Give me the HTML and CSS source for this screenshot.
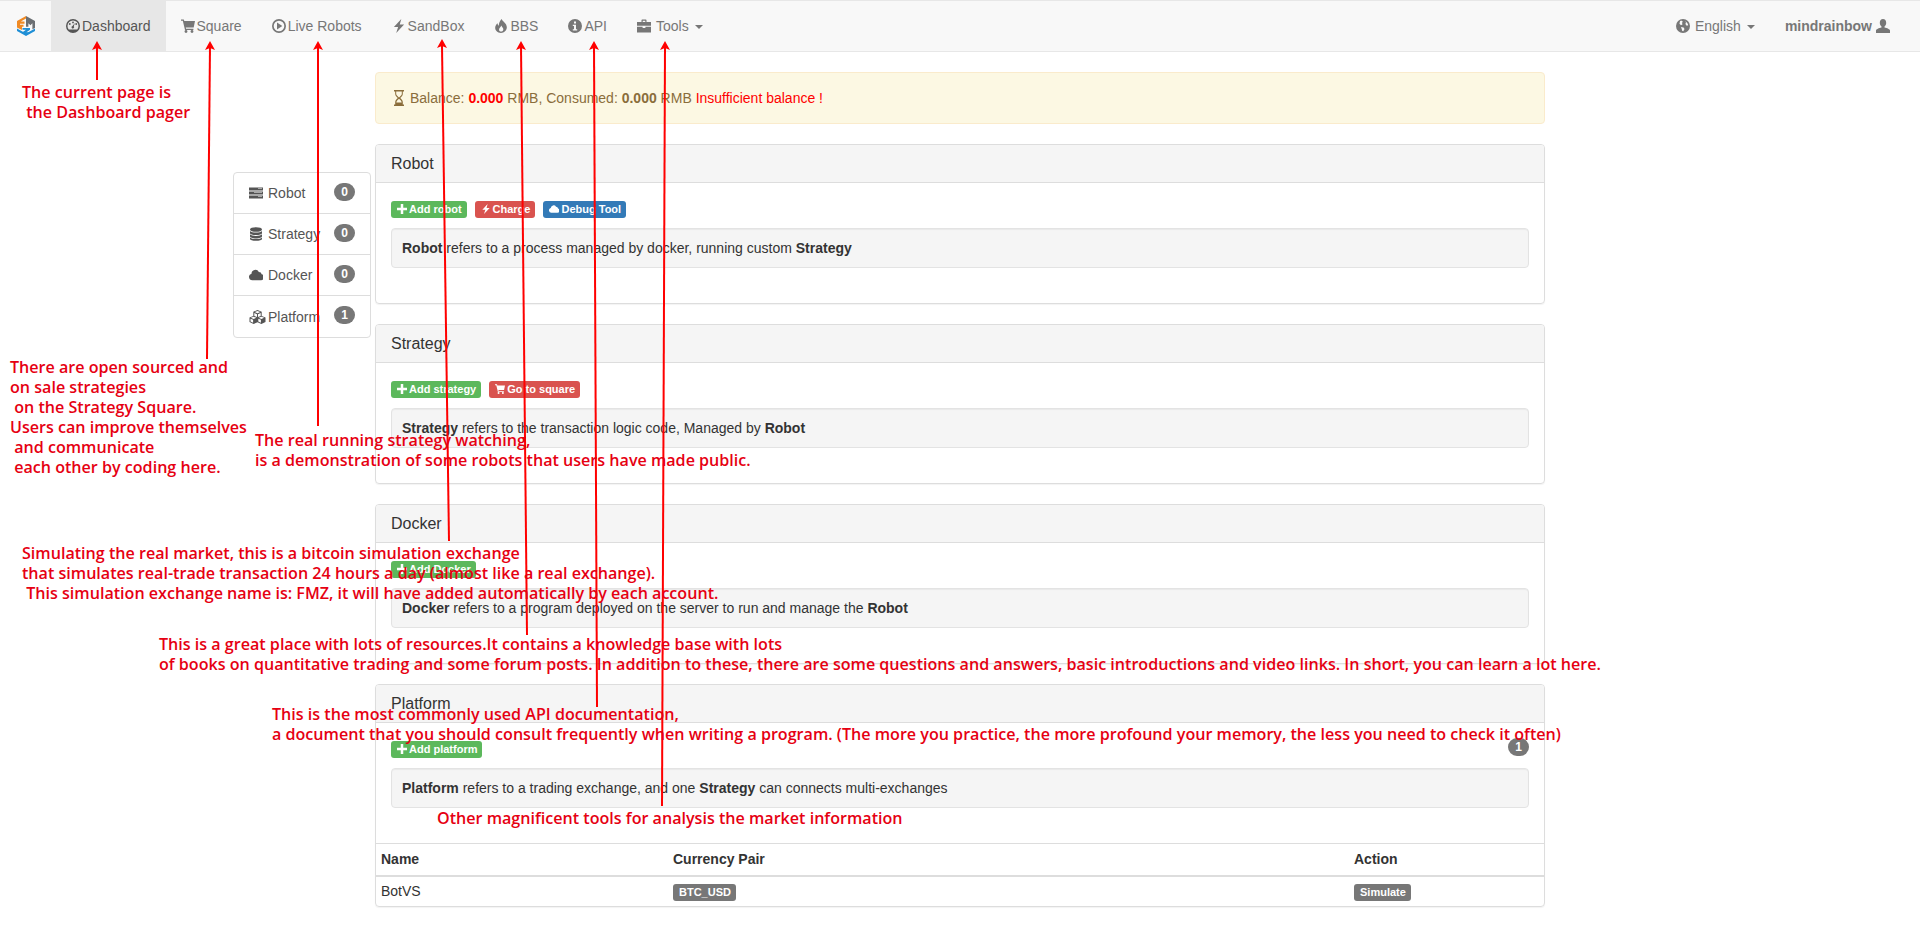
FILE: index.html
```html
<!DOCTYPE html>
<html lang="en">
<head>
    <meta charset="UTF-8">
    <meta name="viewport" content="width=device-width, initial-scale=1.0">
    <title>Dashboard</title>
    <link rel="stylesheet" href="styles.css">
</head>
<body>
    <svg width="0" height="0" class="defs">
        <defs>
            <symbol id="i-dashboard" viewBox="0 0 14 14"><path fill-rule="evenodd" d="M7 0a7 7 0 1 0 0 14A7 7 0 0 0 7 0zm0 1.500a5.500 5.500 0 0 1 5.500 5.500c0 1.300-.45 2.500-1.200 3.500H2.700A5.480 5.480 0 0 1 1.500 7 5.500 5.500 0 0 1 7 1.500z"/><circle cx="7" cy="3.400" r=".9"/><circle cx="3.800" cy="5" r=".9"/><circle cx="10.200" cy="5" r=".9"/><path d="M8.900 3.900 7.800 7.300a1.300 1.300 0 1 1-1.300-.4z"/></symbol>
            <symbol id="i-cart" viewBox="0 0 14 14"><path d="M0 .5h2.800l.5 1.500H14l-1.300 6.500H4.800l.3 1.200h7.300v1.200H4L1.800 1.700H0z"/><circle cx="5" cy="12.500" r="1.400"/><circle cx="11" cy="12.500" r="1.400"/></symbol>
            <symbol id="i-play" viewBox="0 0 14 14"><path fill-rule="evenodd" d="M7 0a7 7 0 1 0 0 14A7 7 0 0 0 7 0zm0 1.700a5.300 5.300 0 1 1 0 10.600A5.300 5.300 0 0 1 7 1.700z"/><path d="M5 3.600 10.300 7 5 10.400z"/></symbol>
            <symbol id="i-flash" viewBox="1.500 0 11 14" preserveAspectRatio="none"><path d="M8.800 0 3 8h3.300L4.800 14 11 5.600H7.600z"/></symbol>
            <symbol id="i-fire" viewBox="1 0 12 14" preserveAspectRatio="none"><path fill-rule="evenodd" d="M7.500 0c.6 2.200 4.500 4.300 4.500 8.300C12 11.500 9.500 14 7 14c-3 0-5-2.500-5-5.200 0-2 1-3.600 2.100-4.600 0 1.200.3 2 1 2.600C5 4.300 6 1.800 7.500 0zM7.300 6.500c-.4 1.500-2 2.400-2 4.200 0 1 .7 1.900 1.700 1.900 1.200 0 2-1 2-2.200 0-1.600-1.300-2.400-1.700-3.900z"/></symbol>
            <symbol id="i-info" viewBox="0 0 14 14"><path fill-rule="evenodd" d="M7 0a7 7 0 1 0 0 14A7 7 0 0 0 7 0zM6 2.400h2v2H6zM4.800 5.700H8v4.500h1.200v1.400H4.800v-1.400H6V7.100H4.800z"/></symbol>
            <symbol id="i-briefcase" viewBox="0 0 14 14"><path fill-rule="evenodd" d="M4.500 3V1.200c0-.4.300-.7.700-.7h3.600c.4 0 .7.300.7.700V3H14v3.800H0V3zm1.200 0h2.600V1.700H5.700zM0 7.800h5.600V9h2.800V7.800H14V13.500H0z"/></symbol>
            <symbol id="i-globe" viewBox="0 0 14 14"><path fill-rule="evenodd" d="M7 0a7 7 0 1 0 0 14A7 7 0 0 0 7 0zM4 2.200c.8-.5 1.500-.5 2.200-.3L6.800 3l-1 .8.800 1.400-1.600 1-1.500-1.500zM9.200 2.200c1.500.7 2.800 2.300 3 4l-1.500.6L9.400 5l.6-1.500zM5 8l2.600.4.900 1.600-1.200 2.300-1-.4-.6-2z"/></symbol>
            <symbol id="i-user" viewBox="0 0 14 14"><path d="M7 0c2 0 3.200 1.500 3.200 3.700 0 1.700-.7 3-1.700 3.700v1.200c2.500.6 5.500 1.700 5.500 3V14H0v-2.400c0-1.300 3-2.400 5.500-3V7.400c-1-.7-1.700-2-1.700-3.700C3.800 1.500 5 0 7 0z"/></symbol>
            <symbol id="i-tasks" viewBox="0 0 14 14"><path fill-rule="evenodd" d="M0 1.500h14v3H0zm9 1h4v-.6H9zM0 5.500h14v3H0zm5 1h8v-.6H5zM0 9.500h14v3H0zm9 1h4v-.6H9z"/></symbol>
            <symbol id="i-database" viewBox="0 0 14 14"><ellipse cx="7" cy="2.500" rx="6" ry="2.300"/><path d="M1 3.900c1 1.200 3.300 1.700 6 1.700s5-.5 6-1.700v2c0 1.300-2.700 2.200-6 2.200S1 7.200 1 5.900z"/><path d="M1 7.300c1 1.200 3.300 1.700 6 1.700s5-.5 6-1.700v2c0 1.300-2.700 2.200-6 2.200s-6-.9-6-2.200z"/><path d="M1 10.500c1 1.200 3.300 1.500 6 1.500s5-.3 6-1.500v1.200c0 1.300-2.700 2.100-6 2.100s-6-.8-6-2.100z"/></symbol>
            <symbol id="i-cloud" viewBox="0 1 13.500 12"><path d="M3.200 12A3.200 3.200 0 0 1 2.400 5.700 3.800 3.800 0 0 1 9.500 4a2.700 2.700 0 0 1 2.700 2.300A2.900 2.900 0 0 1 11.200 12z"/></symbol>
            <symbol id="i-cubes" viewBox="0 0 17 14"><path fill-rule="evenodd" d="M8.500 0 12.700 1.700V6l3.800 1.600v4.500L12.400 14 8.500 12.300 4.600 14 .5 12.100V7.600L4.300 6V1.700zM5.700 2l2.800 1.200L11.300 2 8.500.9zM5.300 3v3l2.700 1.100V4.200zM9 4.200v2.900L11.700 6V3zM1.800 7.800l2.800 1.200 2.800-1.200-2.800-1.100zM9.600 7.800l2.800 1.200 2.800-1.200-2.800-1.100zM1.500 8.700v2.800L4.100 12.700V9.800zM9.300 8.700v2.800l2.600 1.200V9.800z"/></symbol>
            <symbol id="i-plus" viewBox="0 0 12 12"><path d="M4.500 0h3v4.500H12v3H7.500V12h-3V7.500H0v-3h4.500z"/></symbol>
            <symbol id="i-hourglass" viewBox="0 0 12 16"><path fill-rule="evenodd" d="M1 0h10v1.500H9.800V4c0 1.700-1.600 3-2.600 4 1 1 2.600 2.300 2.600 4v2.500H11V16H1v-1.500h1.200V12c0-1.700 1.600-3 2.600-4-1-1-2.600-2.300-2.600-4V1.500H1zm2.200 1.500V4c0 1.200 1.800 2.600 2.800 3.400C7 6.600 8.800 5.200 8.800 4V1.500zM6 8.700C5 9.500 3.600 10.700 3.300 12.500h5.400C8.400 10.700 7 9.500 6 8.700z"/></symbol>
        </defs>
    </svg>

    <nav class="navbar">
        <ul class="nav-list">
            <li class="brand">
                <svg class="logo" viewBox="0 0 18 20">
                    <path fill="#f08a24" d="M9 0 0 5v6.500L3 13V7.800h4.500V5.400H3.800L9 2.500z"/>
                    <path fill="#f08a24" d="M3 8.800h3.500v2H5V14l-2-1z"/>
                    <path fill="#6b6f73" d="M9 0l9 5v7l-2.600 1.200V7.200l-2 2-2-2v3.500H9V2.500z"/>
                    <path fill="#1f8fd6" d="M0 12.500 9 17.500l9-5V15l-9 5-9-5z"/>
                    <path fill="#1f8fd6" d="M5.500 12h7.500v1.800l-3.500 2.400h3.700V17L9 19l-3.500-2v-.8l3.500-2.400H5.500z"/>
                </svg>
            </li>
            <li class="nav-item active"><svg class="icon"><use href="#i-dashboard"/></svg>Dashboard</li>
            <li class="nav-item"><svg class="icon"><use href="#i-cart"/></svg>Square</li>
            <li class="nav-item"><svg class="icon"><use href="#i-play"/></svg>Live Robots</li>
            <li class="nav-item"><svg class="icon"><use href="#i-flash"/></svg>SandBox</li>
            <li class="nav-item"><svg class="icon"><use href="#i-fire"/></svg>BBS</li>
            <li class="nav-item"><svg class="icon"><use href="#i-info"/></svg>API</li>
            <li class="nav-item"><svg class="icon icon-wide"><use href="#i-briefcase"/></svg>Tools<span class="caret"></span></li>
        </ul>
        <ul class="nav-list nav-right">
            <li class="nav-item"><svg class="icon icon-wide"><use href="#i-globe"/></svg>English<span class="caret"></span></li>
            <li class="nav-item nav-user">mindrainbow<svg class="icon icon-after"><use href="#i-user"/></svg></li>
        </ul>
    </nav>

    <div class="page">
        <ul class="side-list">
            <li class="side-item"><svg class="icon side-icon"><use href="#i-tasks"/></svg><span class="side-name">Robot</span><span class="badge">0</span></li>
            <li class="side-item"><svg class="icon side-icon"><use href="#i-database"/></svg><span class="side-name">Strategy</span><span class="badge">0</span></li>
            <li class="side-item"><svg class="icon side-icon"><use href="#i-cloud"/></svg><span class="side-name">Docker</span><span class="badge">0</span></li>
            <li class="side-item"><svg class="icon side-icon side-cubes"><use href="#i-cubes"/></svg><span class="side-name">Platform</span><span class="badge">1</span></li>
        </ul>

        <main class="content">
            <div class="alert">
                <svg class="icon hourglass"><use href="#i-hourglass"/></svg>Balance: <b class="red">0.000</b> RMB, Consumed: <b>0.000</b> RMB <span class="red">Insufficient balance !</span>
            </div>

            <section class="panel">
                <h3 class="panel-title">Robot</h3>
                <div class="panel-body">
                    <div class="actions">
                        <span class="label green"><svg class="label-icon"><use href="#i-plus"/></svg>Add robot</span>
                        <span class="label red-bg"><svg class="label-icon"><use href="#i-flash"/></svg>Charge</span>
                        <span class="label blue"><svg class="label-icon"><use href="#i-cloud"/></svg>Debug Tool</span>
                    </div>
                    <div class="well"><b>Robot</b> refers to a process managed by docker, running custom <b>Strategy</b></div>
                </div>
            </section>

            <section class="panel">
                <h3 class="panel-title">Strategy</h3>
                <div class="panel-body">
                    <div class="actions">
                        <span class="label green"><svg class="label-icon"><use href="#i-plus"/></svg>Add strategy</span>
                        <span class="label red-bg"><svg class="label-icon"><use href="#i-cart"/></svg>Go to square</span>
                    </div>
                    <div class="well"><b>Strategy</b> refers to the transaction logic code, Managed by <b>Robot</b></div>
                </div>
            </section>

            <section class="panel">
                <h3 class="panel-title">Docker</h3>
                <div class="panel-body">
                    <div class="actions">
                        <span class="label green"><svg class="label-icon"><use href="#i-plus"/></svg>Add Docker</span>
                    </div>
                    <div class="well"><b>Docker</b> refers to a program deployed on the server to run and manage the <b>Robot</b></div>
                </div>
            </section>

            <section class="panel">
                <h3 class="panel-title">Platform</h3>
                <div class="panel-body">
                    <div class="actions actions-count">
                        <span class="label green"><svg class="label-icon"><use href="#i-plus"/></svg>Add platform</span>
                        <span class="badge">1</span>
                    </div>
                    <div class="well"><b>Platform</b> refers to a trading exchange, and one <b>Strategy</b> can connects multi-exchanges</div>
                </div>
                <table class="table">
                    <thead>
                        <tr><th class="col-name">Name</th><th class="col-pair">Currency Pair</th><th>Action</th></tr>
                    </thead>
                    <tbody>
                        <tr><td>BotVS</td><td><span class="label grey">BTC_USD</span></td><td><span class="label grey">Simulate</span></td></tr>
                    </tbody>
                </table>
            </section>
        </main>
    </div>

    <!-- red notes drawn on top of the screenshot -->
    <svg class="arrows" viewBox="0 0 1920 947">
        <g class="arrow-lines">
            <line x1="97" y1="80" x2="97" y2="46"/>
            <line x1="207" y1="359" x2="210" y2="46"/>
            <line x1="318" y1="426" x2="318" y2="46"/>
            <line x1="449" y1="541" x2="442" y2="46"/>
            <line x1="527" y1="635" x2="521" y2="46"/>
            <line x1="597" y1="707" x2="594" y2="46"/>
            <line x1="662" y1="806" x2="665" y2="46"/>
        </g>
        <g class="arrow-heads">
            <path d="M97 41l5 9-5-2-5 2z"/>
            <path d="M210 41l5 9-5-2-5 2z"/>
            <path d="M318 41l5 9-5-2-5 2z"/>
            <path d="M442 39l5 9-5-2-5 2z"/>
            <path d="M521 41l5 9-5-2-5 2z"/>
            <path d="M594 41l5 9-5-2-5 2z"/>
            <path d="M665 41l5 9-5-2-5 2z"/>
        </g>
    </svg>
    <div class="note note-current">The current page is
 the Dashboard pager</div>
    <div class="note note-square">There are open sourced and
on sale strategies
 on the Strategy Square.
Users can improve themselves
 and communicate
 each other by coding here.</div>
    <div class="note note-live">The real running strategy watching,
is a demonstration of some robots that users have made public.</div>
    <div class="note note-sandbox">Simulating the real market, this is a bitcoin simulation exchange
that simulates real-trade transaction 24 hours a day (almost like a real exchange).
 This simulation exchange name is: FMZ, it will have added automatically by each account.</div>
    <div class="note note-bbs">This is a great place with lots of resources.It contains a knowledge base with lots
of books on quantitative trading and some forum posts. In addition to these, there are some questions and answers, basic introductions and video links. In short, you can learn a lot here.</div>
    <div class="note note-api">This is the most commonly used API documentation,
a document that you should consult frequently when writing a program. (The more you practice, the more profound your memory, the less you need to check it often)</div>
    <div class="note note-tools">Other magnificent tools for analysis the market information</div>
</body>
</html>
```

FILE: styles.css
```css
* {
    box-sizing: border-box;
}
body {
    margin: 0;
    position: relative;
    font-family: "Liberation Sans", Arial, sans-serif;
    font-size: 14px;
    line-height: 20px;
    color: #333;
    background: #fff;
}
ul {
    margin: 0;
    padding: 0;
    list-style: none;
}
.defs {
    position: absolute;
}
.icon {
    width: 14px;
    height: 14px;
    margin-right: 2px;
    fill: currentColor;
    vertical-align: -2px;
}
.icon-wide {
    margin-right: 5px;
}
.icon-after {
    margin: 0 0 0 4px;
}

/* navbar */
.navbar {
    display: flex;
    justify-content: space-between;
    height: 52px;
    background: #f8f8f8;
    border: 1px solid #e7e7e7;
    border-width: 1px 0;
}
.nav-list {
    display: flex;
}
.nav-right {
    margin-right: 15px;
}
.brand {
    width: 51px;
    display: flex;
    align-items: center;
    justify-content: center;
}
.logo {
    width: 18px;
    height: 20px;
}
.nav-item {
    padding: 15px;
    color: #777;
}
.nav-item.active {
    background: #e7e7e7;
    color: #555;
}
.nav-user {
    font-weight: bold;
}
.caret {
    display: inline-block;
    margin-left: 6px;
    vertical-align: 2px;
    border-top: 4px solid;
    border-left: 4px solid transparent;
    border-right: 4px solid transparent;
}

/* layout */
.page {
    display: grid;
    grid-template-columns: 138px 1170px;
    column-gap: 4px;
    margin-left: 233px;
}
.side-list {
    margin-top: 120px;
    align-self: start;
    border: 1px solid #ddd;
    border-radius: 4px;
    background: #fff;
}
.side-item {
    display: flex;
    align-items: center;
    height: 41px;
    padding-left: 15px;
    padding-right: 15px;
    border-bottom: 1px solid #ddd;
    color: #555;
}
.side-item:last-child {
    border-bottom: 0;
}
.side-icon {
    flex: none;
    margin-right: 5px;
}
.side-cubes {
    width: 17px;
    margin-right: 2px;
}
.side-name {
    flex: 1;
    white-space: nowrap;
}
.badge {
    min-width: 21px;
    height: 18px;
    padding: 3px 7px;
    border-radius: 10px;
    background: #777;
    color: #fff;
    font-size: 12px;
    font-weight: bold;
    line-height: 12px;
    text-align: center;
}
.side-item .badge {
    margin-top: -3px;
}
.content {
    padding-top: 20px;
}
.alert {
    height: 52px;
    padding: 15px;
    margin-bottom: 20px;
    background: #fcf8e3;
    border: 1px solid #faebcc;
    border-radius: 4px;
    color: #8a6d3b;
}
.hourglass {
    width: 12px;
    height: 16px;
    margin: 0 5px 0 2px;
    vertical-align: -3px;
}
.red {
    color: #f00;
}

/* panels */
.panel {
    margin-bottom: 20px;
    border: 1px solid #ddd;
    border-radius: 4px;
    box-shadow: 0 1px 1px rgba(0,0,0,.05);
    overflow: hidden;
}
.panel-title {
    margin: 0;
    height: 38px;
    padding: 10px 15px 8px;
    background: #f5f5f5;
    border-bottom: 1px solid #ddd;
    font-size: 16px;
    font-weight: normal;
    line-height: 18px;
}
.panel-body {
    padding: 18px 15px 15px;
}
.actions {
    display: flex;
    gap: 8px;
    margin-bottom: 10px;
}
.actions-count {
    justify-content: space-between;
    height: 17px;
}
.actions-count .badge {
    margin-top: -3px;
}
.label {
    display: inline-block;
    height: 17px;
    padding: 0 5px 0 6px;
    border-radius: 3px;
    color: #fff;
    font-size: 11px;
    font-weight: bold;
    line-height: 17px;
    white-space: nowrap;
}
.label-icon {
    width: 10px;
    height: 10px;
    margin-right: 2px;
    fill: #fff;
    vertical-align: -1px;
}
.green {
    background: #5cb85c;
}
.red-bg {
    background: #d9534f;
}
.blue {
    background: #337ab7;
}
.grey {
    background: #777;
}
.well {
    height: 40px;
    padding: 10px;
    margin-bottom: 20px;
    background: #f5f5f5;
    border: 1px solid #e3e3e3;
    border-radius: 4px;
    box-shadow: inset 0 1px 1px rgba(0,0,0,.05);
    font-size: 14px;
    line-height: 18px;
}

/* table */
.table {
    width: 100%;
    border-collapse: collapse;
    table-layout: fixed;
}
.table th, .table td {
    padding: 4px 6px 5px 5px;
    text-align: left;
    font-size: 14px;
}
.table th {
    height: 32px;
    border-top: 1px solid #ddd;
    border-bottom: 2px solid #ddd;
}
.table td {
    height: 29px;
}
.col-name {
    width: 292px;
}
.col-pair {
    width: 681px;
}

/* annotations */
.arrows {
    position: absolute;
    top: 0;
    left: 0;
    width: 1920px;
    height: 947px;
    pointer-events: none;
}
.arrow-lines {
    stroke: #f00;
    stroke-width: 2;
}
.arrow-heads {
    fill: #f00;
}
.note {
    position: absolute;
    color: #e60012;
    font-family: "Open Sans", sans-serif;
    font-size: 16.1px;
    font-weight: 600;
    line-height: 20px;
    white-space: pre;
}
.note-current {
    left: 22px;
    top: 82px;
}
.note-square {
    left: 10px;
    top: 357px;
}
.note-live {
    left: 255px;
    top: 430px;
}
.note-sandbox {
    left: 22px;
    top: 543px;
}
.note-bbs {
    left: 159px;
    top: 634px;
}
.note-api {
    left: 272px;
    top: 704px;
}
.note-tools {
    left: 437px;
    top: 808px;
}
```
